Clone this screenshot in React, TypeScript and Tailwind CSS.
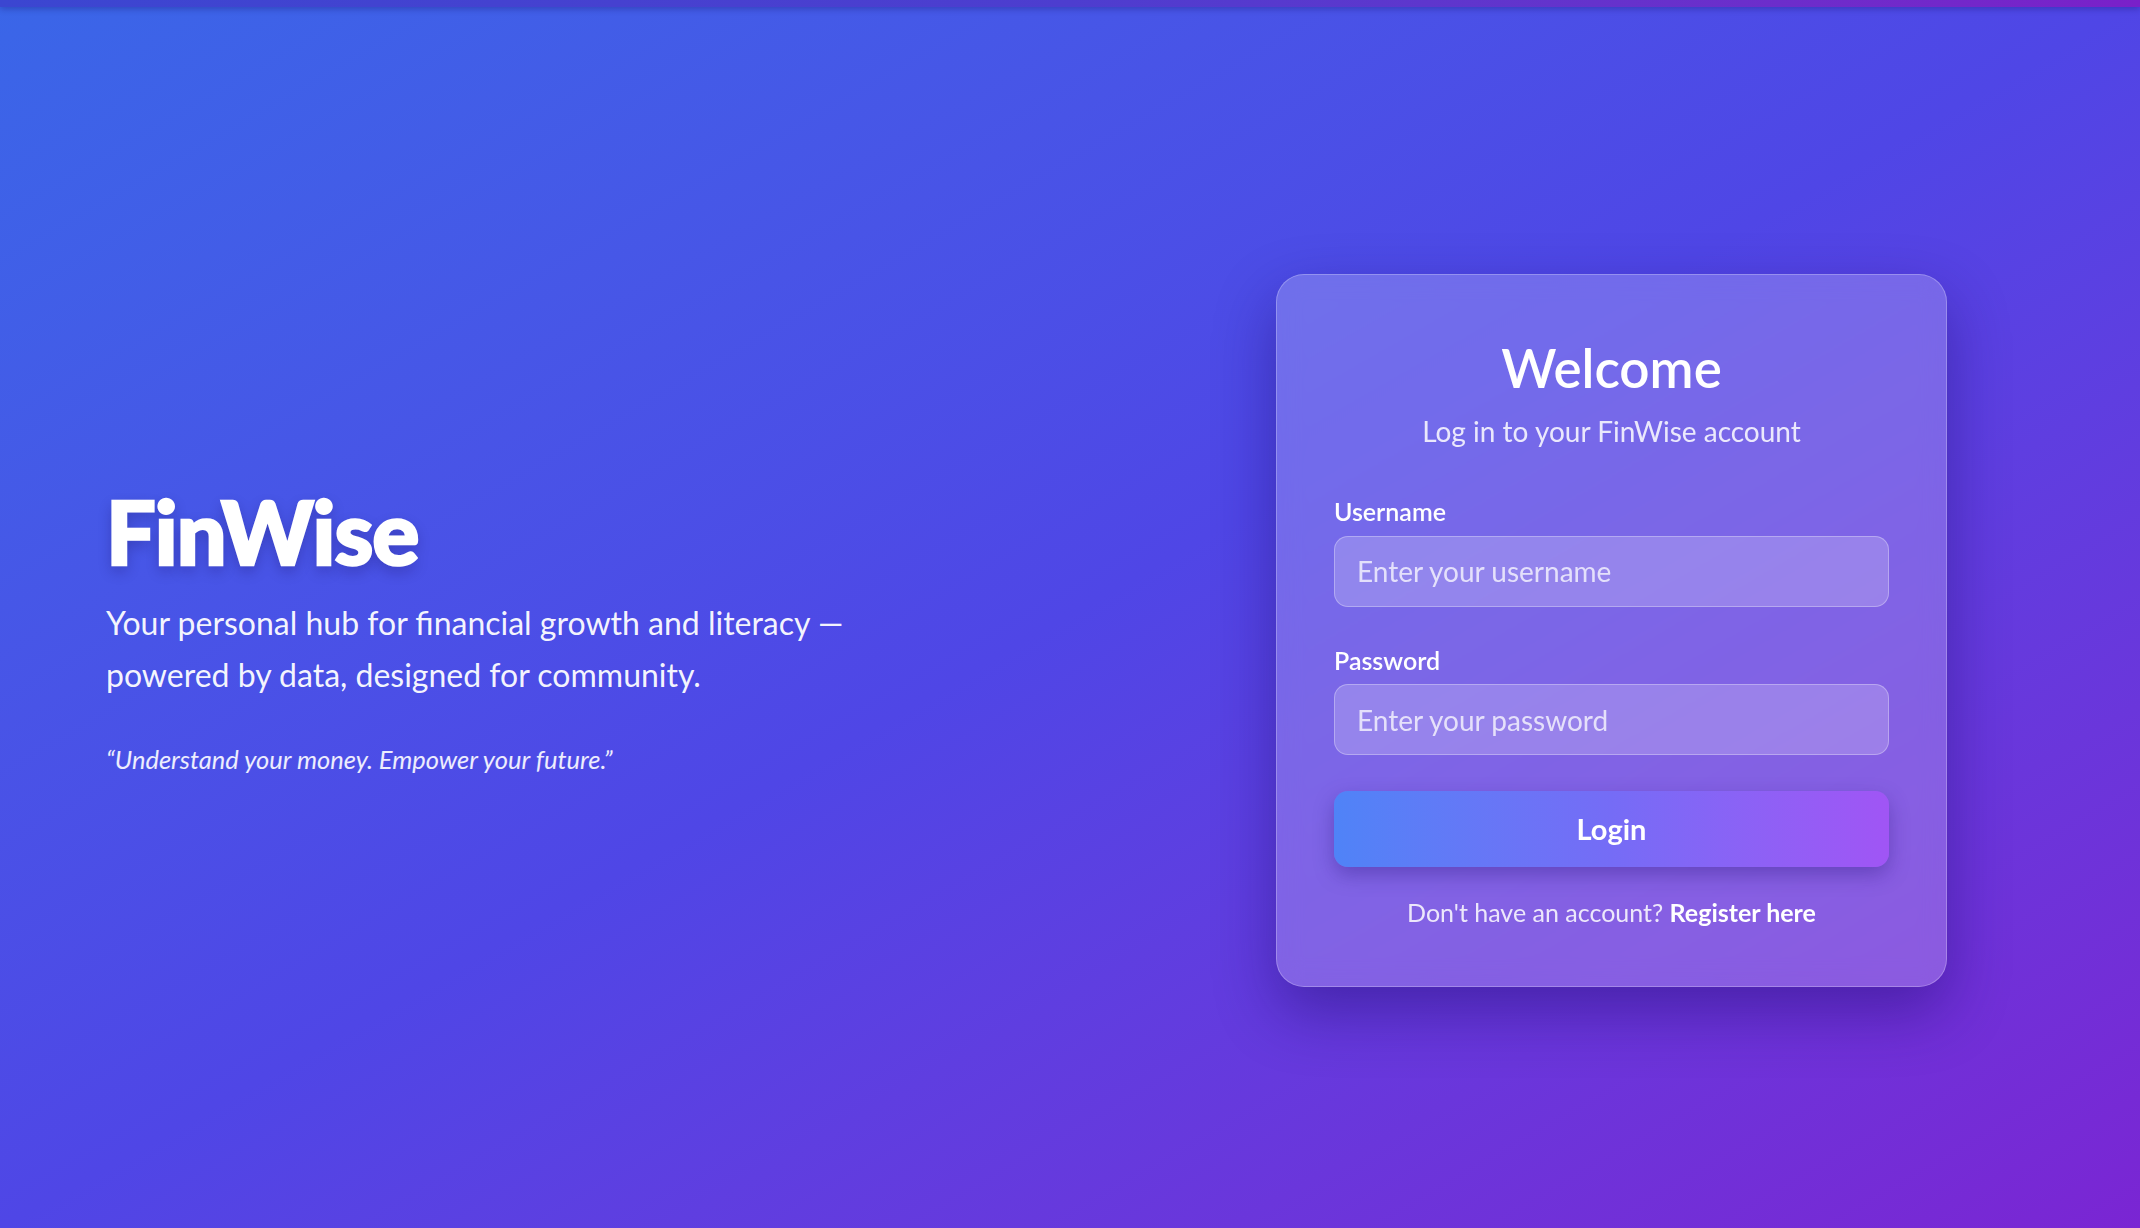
import { useState } from 'react';

const FONT = "font-['Segoe_UI',Lato,'Noto_Sans',sans-serif]";

function LoginCard() {
  const [username, setUsername] = useState('');
  const [password, setPassword] = useState('');

  return (
    <div className="w-[671px] rounded-[28px] border border-white/25 bg-white/20 px-[57px] pt-[61px] pb-[54px] shadow-[0_25px_60px_rgba(30,10,110,0.45)] backdrop-blur-md">
      <h1 className="text-center text-[53px] leading-[1.2] font-semibold text-white">Welcome</h1>
      <p className="mt-[12px] text-center text-[28px] leading-[1.4] text-white/85">
        Log in to your FinWise account
      </p>

      <form className="mt-[44px]" onSubmit={(e) => e.preventDefault()}>
        <label className="block text-[25px] leading-[1.3] font-semibold text-white">Username</label>
        <input
          type="text"
          value={username}
          onChange={(e) => setUsername(e.target.value)}
          placeholder="Enter your username"
          className="mt-[8px] h-[71px] w-full rounded-[14px] border border-white/30 bg-white/20 px-[22px] text-[28px] text-white outline-none placeholder:text-white/75"
        />

        <label className="mt-[37px] block text-[25px] leading-[1.3] font-semibold text-white">Password</label>
        <input
          type="password"
          value={password}
          onChange={(e) => setPassword(e.target.value)}
          placeholder="Enter your password"
          className="mt-[8px] h-[71px] w-full rounded-[14px] border border-white/30 bg-white/20 px-[22px] text-[28px] text-white outline-none placeholder:text-white/75"
        />

        <button
          type="submit"
          className="mt-[36px] h-[76px] w-full rounded-[14px] bg-gradient-to-r from-[#4f83f7] via-[#756cf6] to-[#a055f5] text-[29px] font-bold text-white shadow-[0_8px_20px_rgba(40,20,120,0.35)]"
        >
          Login
        </button>
      </form>

      <p className="mt-[27px] text-center text-[25px] leading-[1.5] text-white/85">
        Don't have an account? <a href="#" className="font-bold text-white">Register here</a>
      </p>
    </div>
  );
}

export default function App() {
  return (
    <div
      className={`${FONT} flex min-h-screen flex-col bg-gradient-to-br from-[#3a66e8] via-[#4f46e6] to-[#7a25d3]`}
    >
      <div className="h-[7px] bg-gradient-to-r from-[#3b46d1] via-[#4d3dcf] to-[#7a20c9] shadow-[0_2px_6px_rgba(20,10,90,0.3)]" />

      <main className="grid flex-1 grid-cols-2 items-center pt-[26px]">
        <div className="pl-[106px]">
          <h2 className="text-[88px] leading-[1.1] font-black tracking-[-1px] text-white [-webkit-text-stroke:2.5px_white] [text-shadow:0_6px_14px_rgba(20,10,80,0.3)]">
            FinWise
          </h2>
          <p className="mt-[17px] max-w-[760px] text-[32px] leading-[1.64] text-white/95">
            Your personal hub for financial growth and literacy — powered by data, designed for community.
          </p>
          <p className="mt-[38px] text-[25.5px] leading-[1.5] italic text-white/90">
            “Understand your money. Empower your future.”
          </p>
        </div>

        <div className="flex justify-center pl-[13px]">
          <LoginCard />
        </div>
      </main>
    </div>
  );
}
